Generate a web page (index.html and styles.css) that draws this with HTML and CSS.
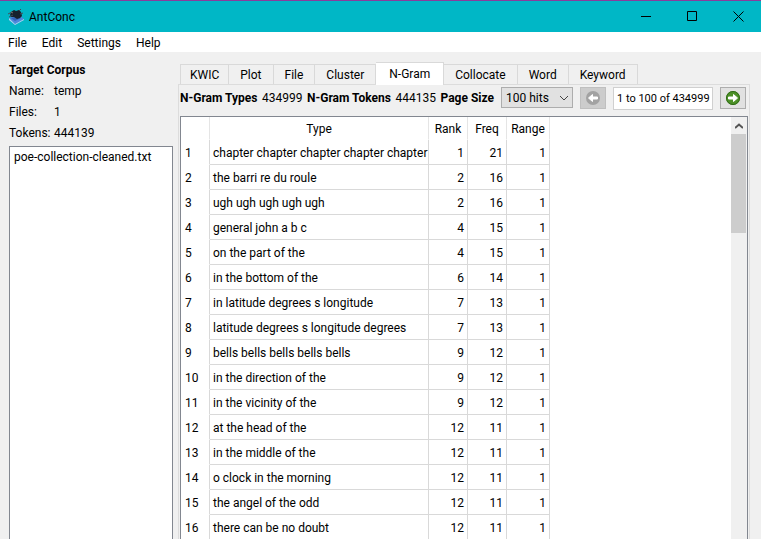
FILE: index.html
```html
<!DOCTYPE html>
<html lang="en">
<head>
<meta charset="utf-8">
<title>AntConc</title>
<link rel="stylesheet" href="styles.css">
</head>
<body>
<header class="titlebar">
  <svg class="logo" viewBox="0 0 16 16" aria-hidden="true">
    <path d="M1 9 11 6l5 4-9 5z" fill="#4f86dc"/>
    <path d="M1 9v2l6 5 9-5v-1l-9 5z" fill="#b4cdf2"/>
    <path d="M3 9l7-2 3 2-6 3z" fill="#3565b8"/>
    <path d="M2 6 3 3l3-2 2 1 3-1 2 2 1 4-2 2-3 1-3-2-3 0z" fill="#17222e"/>
    <path d="M0 5l4-2M1 8l4-2M11 2l2-2M12 5l3-1" stroke="#404c5b" fill="none"/>
    <path d="M3 3l2 1" stroke="#78736d" fill="none"/>
  </svg>
  <span class="app-name">AntConc</span>
  <div class="window-buttons">
    <button type="button" aria-label="Minimize"><svg viewBox="0 0 11 11"><path d="M0 5.500h10"/></svg></button>
    <button type="button" aria-label="Maximize"><svg viewBox="0 0 11 11"><path d="M.5.5h9v9h-9z"/></svg></button>
    <button type="button" aria-label="Close"><svg viewBox="0 0 11 11"><path d="M.5.5l10 10M10.500.5l-10 10"/></svg></button>
  </div>
</header>
<nav class="menubar">
  <button type="button">File</button>
  <button type="button">Edit</button>
  <button type="button">Settings</button>
  <button type="button">Help</button>
</nav>
<main class="workspace">
  <aside class="corpus">
    <h2>Target Corpus</h2>
    <dl>
      <dt>Name:</dt><dd>temp</dd>
      <dt>Files:</dt><dd>1</dd>
      <dt>Tokens:</dt><dd>444139</dd>
    </dl>
    <ul class="file-list">
      <li>poe-collection-cleaned.txt</li>
    </ul>
  </aside>
  <section class="tools">
    <div class="tabs" role="tablist">
      <button type="button" role="tab">KWIC</button>
      <button type="button" role="tab">Plot</button>
      <button type="button" role="tab">File</button>
      <button type="button" role="tab">Cluster</button>
      <button type="button" role="tab" class="active" aria-selected="true">N-Gram</button>
      <button type="button" role="tab">Collocate</button>
      <button type="button" role="tab">Word</button>
      <button type="button" role="tab">Keyword</button>
    </div>
    <div class="pane">
      <div class="toolbar">
        <div class="stats">
          <b>N-Gram Types</b><span>434999</span>
          <b>N-Gram Tokens</b><span>444135</span>
          <label for="page-size">Page Size</label>
        </div>
        <div class="select-box">
          <select id="page-size"><option>100 hits</option></select>
          <svg viewBox="0 0 10 6" aria-hidden="true"><path d="M1 1l4 4 4-4"/></svg>
        </div>
        <button type="button" class="pager" disabled aria-label="Previous page">
          <svg viewBox="0 0 16 16"><circle cx="8" cy="8" r="7" fill="#a2a2a2"/><path d="M3.500 8l4-3.500v2.500h5v2h-5v2.500z" fill="#fff" stroke="#fff"/></svg>
        </button>
        <input class="range" type="text" value="1 to 100 of 434999" aria-label="Hits shown">
        <button type="button" class="pager" aria-label="Next page">
          <svg viewBox="0 0 16 16"><circle cx="8" cy="8" r="7" fill="#4c9127"/><circle cx="8" cy="8" r="6.500" fill="none" stroke="#2f6916"/><path d="M12.500 8l-4-3.500v2.500h-5v2h5v2.500z" fill="#fff" stroke="#fff"/></svg>
        </button>
      </div>
      <div class="results">
        <div class="table-area">
          <table>
            <colgroup><col class="c-index"><col class="c-type"><col class="c-num"><col class="c-num"><col class="c-range"></colgroup>
            <thead><tr><th></th><th>Type</th><th>Rank</th><th>Freq</th><th>Range</th></tr></thead>
            <tbody>
              <tr><th>1</th><td>chapter chapter chapter chapter chapter</td><td>1</td><td>21</td><td>1</td></tr>
              <tr><th>2</th><td>the barri re du roule</td><td>2</td><td>16</td><td>1</td></tr>
              <tr><th>3</th><td>ugh ugh ugh ugh ugh</td><td>2</td><td>16</td><td>1</td></tr>
              <tr><th>4</th><td>general john a b c</td><td>4</td><td>15</td><td>1</td></tr>
              <tr><th>5</th><td>on the part of the</td><td>4</td><td>15</td><td>1</td></tr>
              <tr><th>6</th><td>in the bottom of the</td><td>6</td><td>14</td><td>1</td></tr>
              <tr><th>7</th><td>in latitude degrees s longitude</td><td>7</td><td>13</td><td>1</td></tr>
              <tr><th>8</th><td>latitude degrees s longitude degrees</td><td>7</td><td>13</td><td>1</td></tr>
              <tr><th>9</th><td>bells bells bells bells bells</td><td>9</td><td>12</td><td>1</td></tr>
              <tr><th>10</th><td>in the direction of the</td><td>9</td><td>12</td><td>1</td></tr>
              <tr><th>11</th><td>in the vicinity of the</td><td>9</td><td>12</td><td>1</td></tr>
              <tr><th>12</th><td>at the head of the</td><td>12</td><td>11</td><td>1</td></tr>
              <tr><th>13</th><td>in the middle of the</td><td>12</td><td>11</td><td>1</td></tr>
              <tr><th>14</th><td>o clock in the morning</td><td>12</td><td>11</td><td>1</td></tr>
              <tr><th>15</th><td>the angel of the odd</td><td>12</td><td>11</td><td>1</td></tr>
              <tr><th>16</th><td>there can be no doubt</td><td>12</td><td>11</td><td>1</td></tr>
            </tbody>
          </table>
        </div>
        <div class="scrollbar">
          <button type="button" aria-label="Scroll up"><svg viewBox="0 0 8 6"><path d="M0 5l4-3.500L8 5"/></svg></button>
          <div class="thumb"></div>
        </div>
      </div>
    </div>
  </section>
</main>
</body>
</html>
```
FILE: styles.css
```css
* { box-sizing: border-box; }

body {
  margin: 0;
  height: 100vh;
  overflow: hidden;
  display: flex;
  flex-direction: column;
  background: #f0f0f0;
  color: #000;
  font: 12px/16px Roboto, "Open Sans", sans-serif;
}

button, input, select {
  font: inherit;
  color: inherit;
  margin: 0;
  padding: 0;
  border: 0;
  border-radius: 0;
  background: none;
}

button svg { display: block; }

.titlebar {
  flex: none;
  display: flex;
  align-items: center;
  height: 32px;
  padding-left: 8px;
  gap: 5px;
  border-top: 1px solid #8a3c9c;
  background: #00b7c6;
}

.logo { width: 16px; height: 16px; }

.window-buttons {
  display: flex;
  align-self: stretch;
  margin-left: auto;
}

.window-buttons button {
  width: 46px;
  display: grid;
  place-items: center;
}

.window-buttons svg {
  width: 11px;
  height: 11px;
  fill: none;
  stroke: #000;
}

.menubar {
  flex: none;
  display: flex;
  height: 20px;
  padding-left: 8px;
  gap: 15px;
  background: #fff;
}

.menubar button { height: 21px; }

.workspace {
  flex: 1;
  min-height: 0;
  display: flex;
  gap: 5px;
  padding: 10px 11px 0 9px;
}

.corpus {
  flex: none;
  width: 164px;
  display: flex;
  flex-direction: column;
}

.corpus h2 {
  margin: 0 0 3px;
  font-size: 12px;
  line-height: 16px;
}

.corpus dl {
  display: grid;
  grid-template-columns: 45px 1fr;
  margin: 0;
  line-height: 21px;
}

.corpus dd { margin: 0; }

.file-list {
  flex: 1;
  margin: 2px 0 0;
  padding: 2px 4px;
  list-style: none;
  background: #fff;
  border: 1px solid #828790;
  border-bottom: 0;
}

.tools {
  flex: 1;
  min-width: 0;
  display: flex;
  flex-direction: column;
}

.tabs {
  flex: none;
  display: flex;
  align-items: flex-end;
  height: 22px;
  padding-left: 2px;
}

.tabs button {
  height: 20px;
  padding: 0 11px;
  border: 1px solid #d9d9d9;
  border-width: 1px 1px 0 0;
}

.tabs button:first-child {
  padding: 0 9px;
  border-left-width: 1px;
}

.tabs .active {
  position: relative;
  height: 23px;
  margin-bottom: -1px;
  padding: 0 13px;
  background: #fff;
}

.pane {
  flex: 1;
  min-height: 0;
  display: flex;
  flex-direction: column;
  border: 1px solid #dcdcdc;
  border-bottom: 0;
  padding: 2px 1px 0;
}

.toolbar {
  flex: none;
  display: flex;
  align-items: flex-start;
  gap: 7px;
  height: 29px;
  padding-right: 2px;
}

.stats {
  flex: 1;
  display: flex;
  justify-content: space-between;
  line-height: 22px;
  white-space: nowrap;
}

.stats label { font-weight: 700; }

.select-box { position: relative; }

.select-box select {
  appearance: none;
  display: block;
  width: 72px;
  height: 21px;
  padding: 0 4px;
  border: 1px solid #adadad;
  background: #e1e1e1;
}

.select-box svg {
  position: absolute;
  right: 4px;
  top: 8px;
  width: 10px;
  height: 6px;
  fill: none;
  stroke: #444;
}

.pager {
  display: grid;
  place-items: center;
  width: 26px;
  height: 22px;
  border: 1px solid #adadad;
  background: #e1e1e1;
}

.pager:disabled {
  background: #ccc;
  border-color: #bfbfbf;
}

.pager svg { width: 16px; height: 16px; }

.range {
  width: 100px;
  height: 23px;
  padding: 0 0 0 3px;
  font-size: 11px;
  border: 1px solid #d0d0d0;
  background: #fff;
}

.results {
  flex: 1;
  min-height: 0;
  display: flex;
  background: #fff;
  border: 1px solid #828790;
  border-bottom: 0;
}

.table-area {
  flex: 1;
  min-width: 0;
  overflow: hidden;
}

table {
  table-layout: fixed;
  width: 369px;
  border-collapse: separate;
  border-spacing: 0;
}

.c-index { width: 29px; }
.c-type { width: 219px; }
.c-num { width: 39px; }
.c-range { width: 43px; }

th, td {
  height: 25px;
  padding: 1px 3px 0;
  font-weight: 400;
  text-align: right;
  white-space: nowrap;
  border-right: 1px solid #d9d9d9;
  border-bottom: 1px solid #d9d9d9;
}

thead th {
  height: 23px;
  text-align: center;
  border-right-color: #e5e5e5;
  border-bottom-color: transparent;
}

tbody th {
  padding-left: 4px;
  text-align: left;
  border-bottom-color: transparent;
}

tbody th + td { text-align: left; }

.scrollbar {
  width: 16px;
  padding-right: 1px;
  background: #f0f0f0;
}

.scrollbar button {
  display: grid;
  place-items: center;
  width: 100%;
  height: 17px;
}

.scrollbar svg {
  width: 8px;
  height: 6px;
  fill: none;
  stroke: #555;
  stroke-width: 2;
}

.thumb { height: 99px; background: #cdcdcd; }
```
